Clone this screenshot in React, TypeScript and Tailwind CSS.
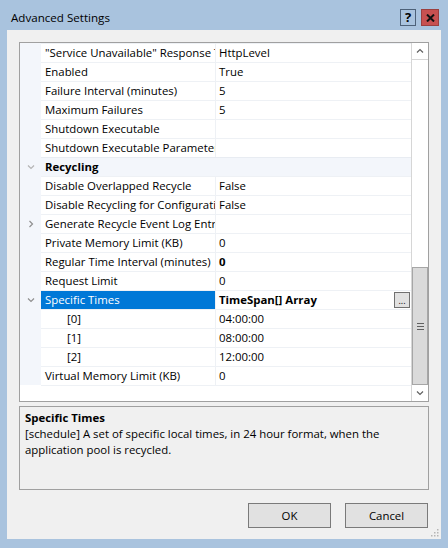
import type { ReactNode } from "react";

type Row = {
  name: string;
  value?: string;
  category?: boolean;
  expander?: "open" | "closed";
  indent?: boolean;
  bold?: boolean;
  selected?: boolean;
  ellipsis?: boolean;
};

const rows: Row[] = [
  { name: '"Service Unavailable" Response Type', value: "HttpLevel" },
  { name: "Enabled", value: "True" },
  { name: "Failure Interval (minutes)", value: "5" },
  { name: "Maximum Failures", value: "5" },
  { name: "Shutdown Executable", value: "" },
  { name: "Shutdown Executable Parameters", value: "" },
  { name: "Recycling", category: true, expander: "open" },
  { name: "Disable Overlapped Recycle", value: "False" },
  { name: "Disable Recycling for Configuration Changes", value: "False" },
  { name: "Generate Recycle Event Log Entry", value: "", expander: "closed" },
  { name: "Private Memory Limit (KB)", value: "0" },
  { name: "Regular Time Interval (minutes)", value: "0", bold: true },
  { name: "Request Limit", value: "0" },
  {
    name: "Specific Times",
    value: "TimeSpan[] Array",
    bold: true,
    selected: true,
    expander: "open",
    ellipsis: true,
  },
  { name: "[0]", value: "04:00:00", indent: true },
  { name: "[1]", value: "08:00:00", indent: true },
  { name: "[2]", value: "12:00:00", indent: true },
  { name: "Virtual Memory Limit (KB)", value: "0" },
];

function Chevron({ dir, color }: { dir: "down" | "right" | "up"; color: string }) {
  const points =
    dir === "down" ? "1,2.5 4,5.5 7,2.5" : dir === "up" ? "1,5.5 4,2.5 7,5.5" : "2.5,1 5.5,4 2.5,7";
  return (
    <svg width="8" height="8" viewBox="0 0 8 8">
      <polyline points={points} fill="none" stroke={color} strokeWidth="1.2" />
    </svg>
  );
}

function PropRow({ row }: { row: Row }) {
  const expander: ReactNode = row.expander ? (
    <Chevron
      dir={row.expander === "open" ? "down" : "right"}
      color={row.category ? "#b4b4b4" : "#8f8f8f"}
    />
  ) : null;

  if (row.category) {
    return (
      <div className="flex h-[19px] bg-[#f3f6fb]">
        <div className="flex w-[21px] items-center justify-center">{expander}</div>
        <div className="flex-1 border-t border-[#e8ecf2] pl-[4px] font-bold leading-[18px] text-black">
          {row.name}
        </div>
      </div>
    );
  }

  return (
    <div className="flex h-[19px]">
      <div className="flex w-[21px] items-center justify-center bg-[#f3f6fb]">{expander}</div>
      <div className="flex flex-1 border-t border-[#eef1f5]">
        <div
          className={[
            "w-[174px] overflow-hidden whitespace-nowrap leading-[18px]",
            row.indent ? "pl-[26px]" : "pl-[4px]",
            row.selected ? "bg-[#0078d7] text-white" : "text-black",
          ].join(" ")}
        >
          {row.name}
        </div>
        <div className="w-px bg-[#eef1f5]" />
        <div className="flex flex-1 items-center justify-between pl-[3px] pr-px">
          <span className={`whitespace-nowrap leading-[18px] text-black ${row.bold ? "font-bold" : ""}`}>
            {row.value}
          </span>
          {row.ellipsis ? (
            <div className="flex h-[16px] w-[16px] items-end justify-center border border-[#707070] bg-[#e1e1e1] pb-[2px] text-[9px] leading-[9px] text-black">
              ...
            </div>
          ) : null}
        </div>
      </div>
    </div>
  );
}

function ScrollBar() {
  return (
    <div className="flex w-[17px] flex-col border-l border-[#d6d6d6] bg-white">
      <div className="flex h-[17px] items-center justify-center border-b border-[#d6d6d6]">
        <Chevron dir="up" color="#606060" />
      </div>
      <div className="flex-1" />
      <div className="flex h-[118px] flex-col items-center justify-center gap-[2px] border border-[#a6a6a6] bg-[#dadada]">
        <div className="h-px w-[7px] bg-[#606060]" />
        <div className="h-px w-[7px] bg-[#606060]" />
        <div className="h-px w-[7px] bg-[#606060]" />
      </div>
      <div className="flex h-[16px] items-center justify-center">
        <Chevron dir="down" color="#606060" />
      </div>
    </div>
  );
}

export default function App() {
  return (
    <div className="flex h-[548px] w-[448px] flex-col bg-[#a9c3de] font-['Open_Sans',sans-serif] text-[11.4px] text-black">
      {/* title bar */}
      <div className="flex h-[30px] shrink-0 items-start justify-between pl-[11px] pr-[9px]">
        <span className="pt-[10px] text-[11.6px] leading-[16px]">Advanced Settings</span>
        <div className="flex gap-[5px] pt-[9px]">
          <div className="flex h-[17px] w-[16px] items-center justify-center border border-[#4d6178] text-[13px] font-bold leading-none">
            ?
          </div>
          <div className="flex h-[17px] w-[18px] items-center justify-center border border-[#9c3f3f] bg-[#c75050]">
            <svg width="9" height="8" viewBox="0 0 9 8">
              <path d="M1 0.5 L8 7.5 M8 0.5 L1 7.5" stroke="#111" strokeWidth="2" />
            </svg>
          </div>
        </div>
      </div>

      {/* client area */}
      <div className="mx-[7px] flex h-[509px] flex-col bg-[#f0f0f0] pl-[12px] pt-[12px]">
        <div className="flex h-[360px] w-[410px] border border-[#a0a0a0] bg-white">
          <div className="flex flex-1 flex-col">
            {rows.map((row) => (
              <PropRow key={row.name} row={row} />
            ))}
            <div className="ml-[21px] border-t border-[#eef1f5]" />
          </div>
          <ScrollBar />
        </div>

        <div className="mt-[4px] h-[84px] w-[410px] border border-[#a0a0a0] px-[5px] pt-[3px]">
          <div className="font-bold leading-[16px]">Specific Times</div>
          <p className="w-[385px] leading-[16px]">
            [schedule] A set of specific local times, in 24 hour format, when the application pool is recycled.
          </p>
        </div>

        <div className="mt-[13px] flex w-[410px] justify-end gap-[14px] pr-px">
          <button
            type="button"
            className="h-[25px] w-[83px] border border-[#7a7a7a] bg-[#e1e1e1] text-[11.4px] leading-none"
          >
            OK
          </button>
          <button
            type="button"
            className="h-[25px] w-[83px] border border-[#7a7a7a] bg-[#e1e1e1] text-[11.4px] leading-none"
          >
            Cancel
          </button>
        </div>

        <div className="mt-auto flex justify-end pb-[2px] pr-[2px]">
          <svg width="8" height="8" viewBox="0 0 8 8">
            <rect x="6" y="0" width="1.5" height="1.5" fill="#b5b5b5" />
            <rect x="3" y="3" width="1.5" height="1.5" fill="#b5b5b5" />
            <rect x="6" y="3" width="1.5" height="1.5" fill="#b5b5b5" />
            <rect x="0" y="6" width="1.5" height="1.5" fill="#b5b5b5" />
            <rect x="3" y="6" width="1.5" height="1.5" fill="#b5b5b5" />
            <rect x="6" y="6" width="1.5" height="1.5" fill="#b5b5b5" />
          </svg>
        </div>
      </div>
    </div>
  );
}
